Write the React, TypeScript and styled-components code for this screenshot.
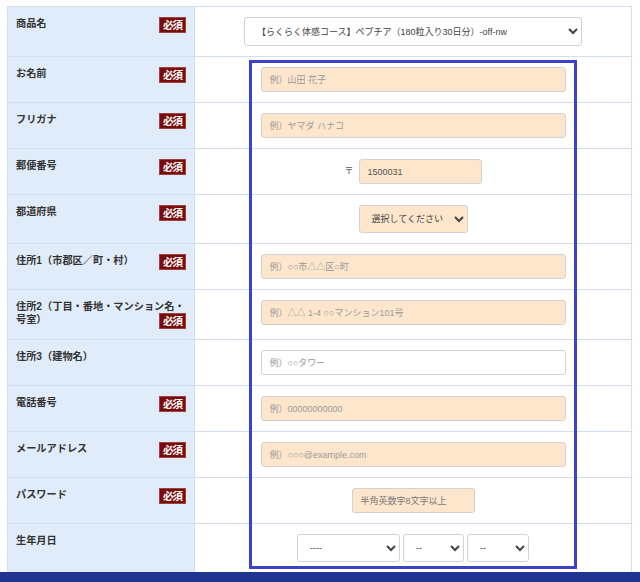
import * as React from "react";
import styled, { createGlobalStyle } from "styled-components";

const GlobalStyle = createGlobalStyle`
  html, body {
    margin: 0;
    padding: 0;
    background: #fff;
    font-family: "Liberation Sans", "Noto Sans CJK JP", sans-serif;
  }
`;

const Page = styled.div`
  position: relative;
  width: 640px;
  height: 582px;
  overflow: hidden;
  background: #fff;
`;

const Wrapper = styled.div`
  padding: 6px 8px 0 7px;
`;

const Table = styled.div`
  border-left: 1px solid #d6e0ec;
  border-right: 1px solid #d6e0ec;
`;

const Row = styled.div`
  display: grid;
  grid-template-columns: 187px 1fr;
  border-top: 1px solid #d3deec;
`;

const Label = styled.div`
  display: flow-root;
  background: #e1ecfb;
  border-right: 1px solid #d3deec;
  padding: 10px 6px 10px 8px;
  font-size: 10.2px;
  line-height: 13px;
  font-weight: bold;
  color: #333;
`;

const Badge = styled.span`
  float: right;
  width: 27px;
  height: 16px;
  margin-right: 2px;
  box-sizing: border-box;
  background: #7a0b0b;
  border: 1px solid #a04040;
  color: #fff;
  font-size: 10.5px;
  line-height: 14px;
  text-align: center;
  font-weight: bold;
  letter-spacing: -1px;
`;

const Value = styled.div`
  display: flex;
  justify-content: center;
  align-items: flex-start;
  padding: 10px 10px;
  background: #fff;
`;

const Input = styled.input<{ $w?: number; $required?: boolean }>`
  box-sizing: border-box;
  width: ${(p) => p.$w ?? 305}px;
  height: 25px;
  padding: 0 8px;
  border: 1px solid #d2d2d2;
  border-radius: 3px;
  background: ${(p) => (p.$required ? "#fde6cc" : "#fff")};
  font-family: "Liberation Sans", "Noto Sans CJK JP", sans-serif;
  font-size: 9px;
  color: #555;
  outline: none;
  &::placeholder {
    color: #9a9a9a;
  }
`;

const PasswordInput = styled(Input)`
  &::placeholder {
    color: #777;
  }
`;

const Select = styled.select<{ $w: number; $h?: number; $required?: boolean }>`
  box-sizing: border-box;
  width: ${(p) => p.$w}px;
  height: ${(p) => p.$h ?? 28}px;
  padding: 0 4px 0 8px;
  border: 1px solid #d2d2d2;
  border-radius: 3px;
  background: ${(p) => (p.$required ? "#fde6cc" : "#fff")};
  font-family: "Liberation Sans", "Noto Sans CJK JP", sans-serif;
  font-size: 9px;
  color: #444;
  outline: none;
`;

const Zip = styled.span`
  font-size: 9px;
  color: #555;
  line-height: 25px;
  margin-right: 5px;
`;

const DateGroup = styled.div`
  display: flex;
  gap: 3px;
`;

const Highlight = styled.div`
  position: absolute;
  left: 249px;
  top: 60px;
  width: 328px;
  height: 509px;
  box-sizing: border-box;
  border: 3px solid #3c41c6;
  pointer-events: none;
`;

const Footer = styled.div`
  height: 40px;
  background: #1f3591;
`;

const Required = () => <Badge>必須</Badge>;

export default function App() {
  return (
    <Page>
      <GlobalStyle />
      <Wrapper>
        <Table>
          <Row>
            <Label>
              商品名
              <Required />
            </Label>
            <Value>
              <Select $w={338} $h={29} defaultValue="a">
                <option value="a">【らくらく体感コース】ペプチア（180粒入り30日分）-off-nw</option>
              </Select>
            </Value>
          </Row>
          <Row>
            <Label>
              お名前
              <Required />
            </Label>
            <Value>
              <Input $required placeholder="例）山田 花子" />
            </Value>
          </Row>
          <Row>
            <Label>
              フリガナ
              <Required />
            </Label>
            <Value>
              <Input $required placeholder="例）ヤマダ ハナコ" />
            </Value>
          </Row>
          <Row>
            <Label>
              郵便番号
              <Required />
            </Label>
            <Value>
              <Zip>〒</Zip>
              <Input $required $w={123} defaultValue="1500031" />
            </Value>
          </Row>
          <Row>
            <Label>
              都道府県
              <Required />
            </Label>
            <Value>
              <Select $required $w={109} defaultValue="">
                <option value="">選択してください</option>
              </Select>
            </Value>
          </Row>
          <Row>
            <Label>
              住所1（市郡区／町・村）
              <Required />
            </Label>
            <Value>
              <Input $required placeholder="例）○○市△△区○町" />
            </Value>
          </Row>
          <Row>
            <Label>
              住所2（丁目・番地・マンション名・号室）
              <Required />
            </Label>
            <Value>
              <Input $required placeholder="例）△△ 1-4 ○○マンション101号" />
            </Value>
          </Row>
          <Row>
            <Label>住所3（建物名）</Label>
            <Value>
              <Input placeholder="例）○○タワー" />
            </Value>
          </Row>
          <Row>
            <Label>
              電話番号
              <Required />
            </Label>
            <Value>
              <Input $required placeholder="例）00000000000" />
            </Value>
          </Row>
          <Row>
            <Label>
              メールアドレス
              <Required />
            </Label>
            <Value>
              <Input $required placeholder="例）○○○@example.com" />
            </Value>
          </Row>
          <Row>
            <Label>
              パスワード
              <Required />
            </Label>
            <Value>
              <PasswordInput $required $w={123} type="password" placeholder="半角英数字8文字以上" />
            </Value>
          </Row>
          <Row>
            <Label>生年月日</Label>
            <Value>
              <DateGroup>
                <Select $w={103} defaultValue="">
                  <option value="">----</option>
                </Select>
                <Select $w={61} defaultValue="">
                  <option value="">--</option>
                </Select>
                <Select $w={62} defaultValue="">
                  <option value="">--</option>
                </Select>
              </DateGroup>
            </Value>
          </Row>
        </Table>
      </Wrapper>
      <Footer />
      <Highlight />
    </Page>
  );
}
